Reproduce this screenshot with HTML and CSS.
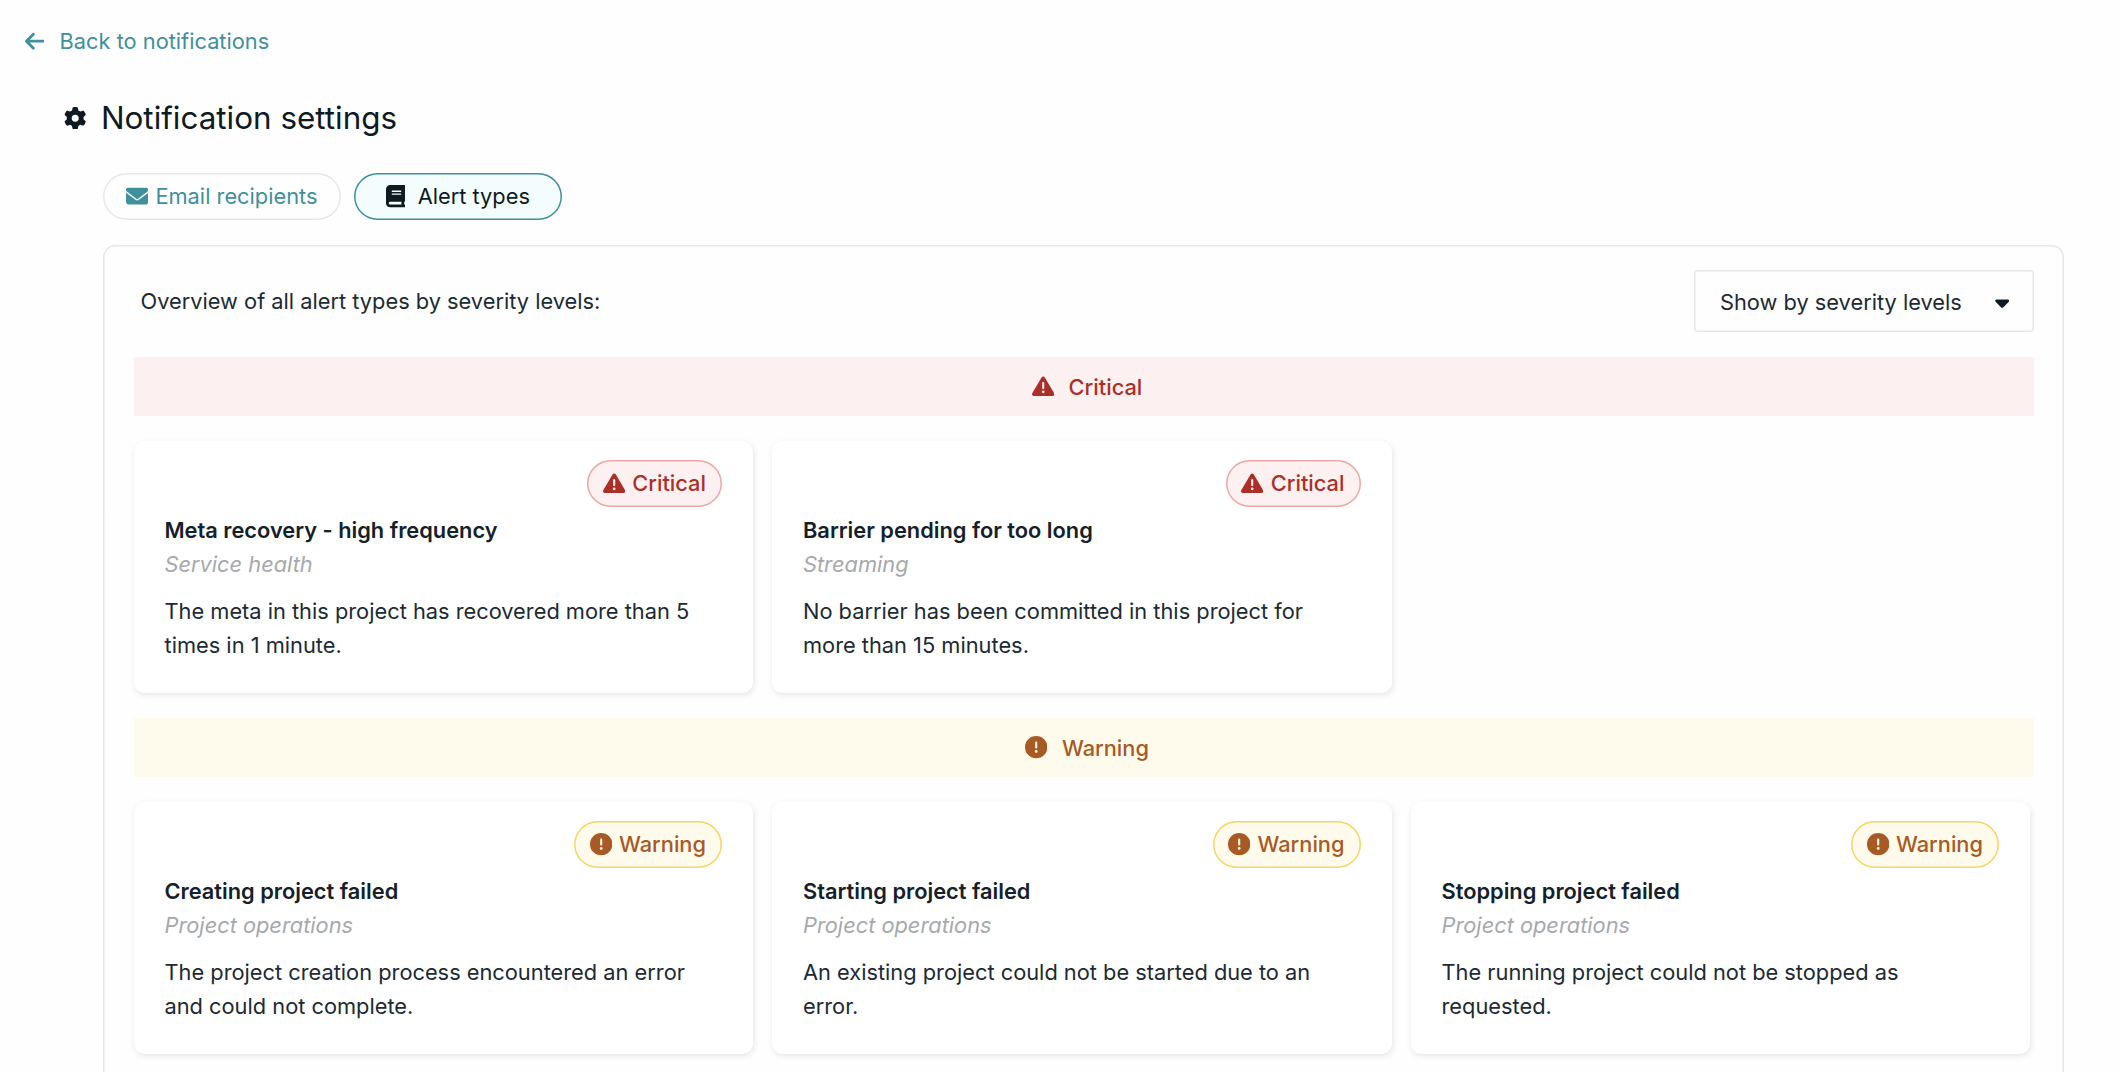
FILE: index.html
```html
<!DOCTYPE html>
<html lang="en">
<head>
<meta charset="utf-8">
<title>Notification settings</title>
<link rel="stylesheet" href="styles.css">
</head>
<body>
<svg class="sprite" aria-hidden="true">
  <symbol id="arrow-left" viewBox="0 0 448 512"><path d="M9.4 233.4c-12.5 12.5-12.5 32.8 0 45.3l160 160c12.5 12.5 32.8 12.5 45.3 0s12.5-32.8 0-45.3L109.2 288 416 288c17.7 0 32-14.3 32-32s-14.3-32-32-32l-306.7 0L214.6 118.6c12.5-12.5 12.5-32.8 0-45.3s-32.8-12.5-45.3 0l-160 160z"/></symbol>
  <symbol id="gear" viewBox="0 0 512 512"><path d="M495.9 166.6c3.2 8.7 .5 18.4-6.4 24.6l-43.3 39.4c1.1 8.3 1.7 16.8 1.7 25.4s-.6 17.1-1.7 25.4l43.3 39.4c6.9 6.2 9.6 15.9 6.4 24.6c-4.4 11.9-9.7 23.3-15.8 34.3l-4.7 8.1c-6.6 11-14 21.4-22.1 31.2c-5.9 7.2-15.7 9.6-24.5 6.8l-55.7-17.7c-13.4 10.3-28.2 18.9-44 25.4l-12.5 57.1c-2 9.1-9 16.3-18.2 17.8c-13.8 2.3-28 3.5-42.5 3.5s-28.7-1.2-42.5-3.5c-9.2-1.5-16.2-8.7-18.2-17.8l-12.5-57.1c-15.8-6.5-30.6-15.1-44-25.4L83.1 425.9c-8.8 2.8-18.6 .3-24.5-6.8c-8.1-9.8-15.5-20.2-22.1-31.2l-4.7-8.1c-6.1-11-11.4-22.4-15.8-34.3c-3.2-8.7-.5-18.4 6.4-24.6l43.3-39.4C64.6 273.1 64 264.6 64 256s.6-17.1 1.7-25.4L22.4 191.2c-6.9-6.2-9.6-15.9-6.4-24.6c4.4-11.9 9.7-23.3 15.8-34.3l4.7-8.1c6.6-11 14-21.4 22.1-31.2c5.9-7.2 15.7-9.6 24.5-6.8l55.7 17.7c13.4-10.3 28.2-18.9 44-25.4l12.5-57.1c2-9.1 9-16.3 18.2-17.8C227.3 1.2 241.5 0 256 0s28.7 1.2 42.5 3.5c9.2 1.5 16.2 8.7 18.2 17.8l12.5 57.1c15.8 6.5 30.6 15.1 44 25.4l55.7-17.7c8.8-2.8 18.6-.3 24.5 6.8c8.1 9.8 15.5 20.2 22.1 31.2l4.7 8.1c6.1 11 11.4 22.4 15.8 34.3zM256 336a80 80 0 1 0 0-160 80 80 0 1 0 0 160z"/></symbol>
  <symbol id="envelope" viewBox="0 0 512 512"><path d="M48 64C21.5 64 0 85.5 0 112c0 15.1 7.1 29.3 19.2 38.4L236.8 313.6c11.4 8.5 27 8.5 38.4 0L492.8 150.4c12.1-9.1 19.2-23.3 19.2-38.4c0-26.5-21.5-48-48-48L48 64zM0 176L0 384c0 35.3 28.7 64 64 64l384 0c35.3 0 64-28.7 64-64l0-208L294.4 339.2c-22.8 17.1-54 17.1-76.8 0L0 176z"/></symbol>
  <symbol id="book" viewBox="0 0 448 512"><path d="M96 0C43 0 0 43 0 96L0 416c0 53 43 96 96 96l288 0 32 0c17.7 0 32-14.3 32-32s-14.3-32-32-32l0-64c17.7 0 32-14.3 32-32l0-320c0-17.7-14.3-32-32-32L384 0 96 0zm0 384l256 0 0 64L96 448c-17.7 0-32-14.3-32-32s14.3-32 32-32zm32-240c0-8.8 7.2-16 16-16l192 0c8.8 0 16 7.2 16 16s-7.2 16-16 16l-192 0c-8.8 0-16-7.2-16-16zm16 48l192 0c8.8 0 16 7.2 16 16s-7.2 16-16 16l-192 0c-8.8 0-16-7.2-16-16s7.2-16 16-16z"/></symbol>
  <symbol id="caret" viewBox="0 0 320 512"><path d="M137.4 374.6c12.5 12.5 32.8 12.5 45.3 0l128-128c9.2-9.2 11.9-22.9 6.9-34.9s-16.6-19.8-29.6-19.8L32 192c-12.9 0-24.6 7.8-29.6 19.8s-2.2 25.7 6.9 34.9l128 128z"/></symbol>
  <symbol id="critical" viewBox="0 0 512 512"><path d="M256 32c14.2 0 27.3 7.5 34.5 19.8l216 368c7.3 12.4 7.3 27.7 .2 40.1S486.3 480 472 480L40 480c-14.3 0-27.6-7.7-34.7-20.1s-7-27.8 .2-40.1l216-368C228.7 39.5 241.8 32 256 32zm0 128c-13.3 0-24 10.7-24 24l0 112c0 13.3 10.7 24 24 24s24-10.7 24-24l0-112c0-13.3-10.7-24-24-24zm32 224a32 32 0 1 0 -64 0 32 32 0 1 0 64 0z"/></symbol>
  <symbol id="warning" viewBox="0 0 512 512"><path d="M256 512A256 256 0 1 0 256 0a256 256 0 1 0 0 512zm0-384c13.3 0 24 10.7 24 24l0 112c0 13.3-10.7 24-24 24s-24-10.7-24-24l0-112c0-13.3 10.7-24 24-24zM224 352a32 32 0 1 1 64 0 32 32 0 1 1 -64 0z"/></symbol>
</svg>

<a class="back"><svg class="icon icon-narrow"><use href="#arrow-left"/></svg><span>Back to notifications</span></a>

<main class="page">
  <h1 class="title"><svg class="icon"><use href="#gear"/></svg><span>Notification settings</span></h1>

  <nav class="tabs">
    <a class="tab"><svg class="icon"><use href="#envelope"/></svg><span>Email recipients</span></a>
    <a class="tab tab-active"><svg class="icon icon-narrow"><use href="#book"/></svg><span>Alert types</span></a>
  </nav>

  <section class="panel">
    <header class="panel-head">
      <p>Overview of all alert types by severity levels:</p>
      <div class="select"><span>Show by severity levels</span><svg class="icon icon-caret"><use href="#caret"/></svg></div>
    </header>

    <h2 class="band critical"><svg class="icon"><use href="#critical"/></svg><span>Critical</span></h2>
    <div class="cards">
      <article class="card">
        <span class="badge critical"><svg class="icon"><use href="#critical"/></svg><span>Critical</span></span>
        <h3>Meta recovery - high frequency</h3>
        <p class="category">Service health</p>
        <p class="description">The meta in this project has recovered more than 5 times in 1 minute.</p>
      </article>
      <article class="card">
        <span class="badge critical"><svg class="icon"><use href="#critical"/></svg><span>Critical</span></span>
        <h3>Barrier pending for too long</h3>
        <p class="category">Streaming</p>
        <p class="description">No barrier has been committed in this project for more than 15 minutes.</p>
      </article>
    </div>

    <h2 class="band warning"><svg class="icon"><use href="#warning"/></svg><span>Warning</span></h2>
    <div class="cards">
      <article class="card">
        <span class="badge warning"><svg class="icon"><use href="#warning"/></svg><span>Warning</span></span>
        <h3>Creating project failed</h3>
        <p class="category">Project operations</p>
        <p class="description">The project creation process encountered an error and could not complete.</p>
      </article>
      <article class="card">
        <span class="badge warning"><svg class="icon"><use href="#warning"/></svg><span>Warning</span></span>
        <h3>Starting project failed</h3>
        <p class="category">Project operations</p>
        <p class="description">An existing project could not be started due to an error.</p>
      </article>
      <article class="card">
        <span class="badge warning"><svg class="icon"><use href="#warning"/></svg><span>Warning</span></span>
        <h3>Stopping project failed</h3>
        <p class="category">Project operations</p>
        <p class="description">The running project could not be stopped as requested.</p>
      </article>
    </div>
  </section>
</main>
</body>
</html>
```

FILE: styles.css
```css
* {
  box-sizing: border-box;
}

body {
  margin: 0;
  height: 1072px;
  overflow: hidden;
  background: #fefefe;
  color: #1c2a33;
  font: 21.8px/34.2px Inter, "Liberation Sans", sans-serif;
}

h1, h2, h3, p {
  margin: 0;
  font-size: inherit;
  font-weight: 400;
}

.sprite {
  display: none;
}

.icon {
  flex: none;
  width: 22.4px;
  height: 22.4px;
  fill: currentColor;
}

.icon-narrow {
  width: 19.6px;
}

.icon-caret {
  width: 14.4px;
  color: #0e1a22;
}

.back {
  display: flex;
  align-items: center;
  gap: 15.5px;
  padding: 24px 24.5px 0;
  color: #3f909c;
}

.page {
  padding: 37px 58px 0 103px;
}

.title {
  display: flex;
  align-items: center;
  gap: 15px;
  margin-left: -39.5px;
  color: #0e1a22;
  font-size: 31.4px;
  line-height: 46px;
}

.tabs {
  display: flex;
  gap: 13px;
  margin-top: 32px;
}

.tab {
  display: flex;
  align-items: center;
  justify-content: center;
  gap: 7px;
  width: 237.5px;
  height: 46.7px;
  border-radius: 24px;
  box-shadow: inset 0 0 0 1.5px #e6e7e7;
  color: #3f909c;
}

.tab-active {
  gap: 12.5px;
  width: 208.5px;
  box-shadow: inset 0 0 0 1.5px #3f909c;
  background: #f4fdfe;
  color: #0e1a22;
}

.panel {
  height: 860px;
  margin-top: 25.3px;
  padding: 25px 30.5px 0;
  border-radius: 12px;
  box-shadow: inset 0 0 0 1.5px #e6e7e7;
}

.panel-head {
  display: flex;
  align-items: center;
  justify-content: space-between;
  padding-left: 7px;
}

.select {
  display: flex;
  align-items: center;
  justify-content: space-between;
  width: 339.5px;
  height: 62px;
  padding: 2px 24.5px 0 26px;
  border-radius: 4px;
  box-shadow: inset 0 0 0 1.5px #e6e7e7;
}

.critical {
  --tint: #fcf1f0;
  --edge: #eba9a6;
  color: #ab2f28;
}

.warning {
  --tint: #fffbec;
  --edge: #f6d465;
  color: #a75a24;
}

.band {
  display: flex;
  align-items: center;
  justify-content: center;
  gap: 14.5px;
  height: 59px;
  margin: 25px 0;
  padding-left: 7px;
  background: var(--tint);
  font-weight: 500;
}

.cards {
  display: grid;
  grid-template-columns: repeat(3, 619.5px);
  gap: 19px;
}

.card {
  display: flex;
  flex-direction: column;
  height: 252px;
  padding: 19px 31px 0;
  border-radius: 11px;
  background: #fff;
  box-shadow: 1px 2px 6px rgba(0, 0, 0, 0.1);
}

.badge {
  display: flex;
  align-items: center;
  align-self: flex-end;
  gap: 7px;
  height: 46.7px;
  padding: 0 16px 0 15.5px;
  border-radius: 24px;
  box-shadow: inset 0 0 0 1.5px var(--edge);
  background: var(--tint);
  font-weight: 500;
}

.card h3 {
  margin-top: 6.3px;
  color: #14212a;
  font-weight: 600;
}

.category {
  color: #a6a9ac;
  font-style: italic;
}

.description {
  margin-top: 12px;
}
```
